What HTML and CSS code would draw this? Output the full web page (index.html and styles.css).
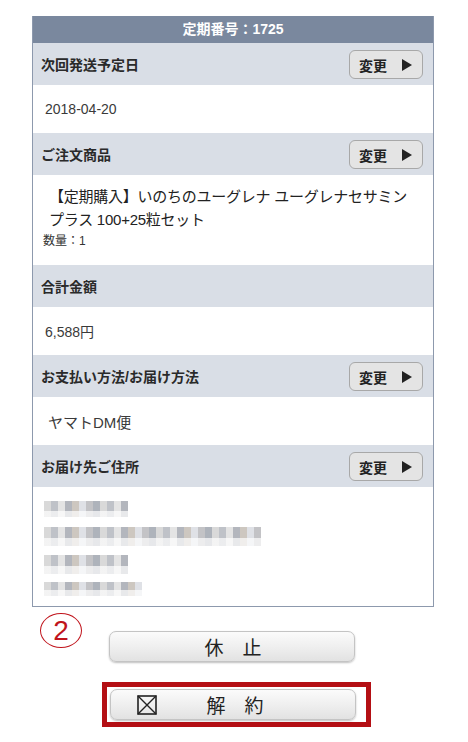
FILE: index.html
```html
<!DOCTYPE html>
<html lang="ja">
<head>
<meta charset="utf-8">
<link rel="stylesheet" href="styles.css">
</head>
<body>
<div class="card">
  <div class="card-head">定期番号：1725</div>

  <div class="row-label"><span>次回発送予定日</span><button class="chg">変更<span class="tri"></span></button></div>
  <div class="row-value">2018-04-20</div>

  <div class="row-label"><span>ご注文商品</span><button class="chg">変更<span class="tri"></span></button></div>
  <div class="row-product">
    <p class="pname">【定期購入】いのちのユーグレナ ユーグレナセサミン<br>プラス 100+25粒セット</p>
    <p class="qty">数量：1</p>
  </div>

  <div class="row-label"><span>合計金額</span></div>
  <div class="row-value">6,588円</div>

  <div class="row-label"><span>お支払い方法/お届け方法</span><button class="chg">変更<span class="tri"></span></button></div>
  <div class="row-value ship">ヤマトDM便</div>

  <div class="row-label"><span>お届け先ご住所</span><button class="chg">変更<span class="tri"></span></button></div>
  <div class="row-address">
    <div class="blur b1"></div>
    <div class="blur b2"></div>
    <div class="blur b3"></div>
    <div class="blur b4"></div>
  </div>
</div>

<div class="actions">
  <div class="mark">2</div>
  <button class="big pause">休　止</button>
  <div class="highlight">
    <button class="big cancel">
      <svg class="xbox" viewBox="0 0 20 20" width="20" height="20"><rect x="1" y="1" width="18" height="18" fill="none" stroke="#222" stroke-width="1.6"/><path d="M1 1 L19 19 M19 1 L1 19" stroke="#222" stroke-width="1.4"/></svg>
      <span class="lbl">解　約</span>
    </button>
  </div>
</div>
</body>
</html>
```

FILE: styles.css
```css
* { box-sizing: border-box; }
body {
  margin: 0;
  background: #fff;
  font-family: "Liberation Sans", "Noto Sans CJK JP", sans-serif;
  color: #333;
}
.card {
  margin: 16px 0 0 32px;
  width: 402px;
  border: 1px solid #8d99ad;
  border-top: none;
}
.card-head {
  height: 27px;
  background: #7a889e;
  color: #fff;
  font-weight: bold;
  font-size: 14px;
  text-align: center;
  line-height: 27px;
}
.row-label {
  height: 42px;
  background: #d9dee6;
  display: flex;
  align-items: center;
  justify-content: space-between;
  padding: 0 10px 0 8px;
  font-size: 14px;
  font-weight: bold;
  color: #2a2a2a;
}
.chg {
  width: 74px;
  height: 29px;
  border: 1px solid #a8a8a8;
  border-radius: 6px;
  background: #e4e4e4;
  font-family: inherit;
  font-size: 14px;
  font-weight: bold;
  color: #222;
  display: flex;
  align-items: center;
  padding: 0 0 0 9px;
  gap: 15px;
  margin-top: 1px;
}
.tri {
  width: 0;
  height: 0;
  border-left: 10px solid #222;
  border-top: 6px solid transparent;
  border-bottom: 6px solid transparent;
}
.row-value {
  height: 48px;
  display: flex;
  align-items: center;
  padding-left: 12px;
  font-size: 14px;
  color: #3a3a3a;
}
.row-value.ship { padding-left: 15px; font-size: 15px; }
.row-product {
  height: 90px;
  padding: 10px 0 0 10px;
}
.pname {
  margin: 0;
  padding-left: 6px;
  font-size: 15px;
  letter-spacing: -0.25px;
  line-height: 23px;
  color: #222;
  white-space: nowrap;
}
.qty {
  margin: 0;
  font-size: 12px;
  line-height: 20px;
  color: #333;
}
.row-address {
  height: 119px;
  padding: 14px 0 0 11px;
  display: flex;
  flex-direction: column;
}
.blur {
  height: 16px;
  background:
    linear-gradient(180deg, rgba(255,255,255,0) 0 60%, rgba(255,255,255,0.7) 60% 100%),
    repeating-linear-gradient(90deg, #d9d9d9 0 7px, #bfc2c8 7px 14px, #e4e4e4 14px 21px, #b3b6bd 21px 28px, #cdc7c0 28px 35px, #dfe1e6 35px 42px, #c3c3c6 42px 49px, #aeb3bb 49px 56px);
}
.b1 { width: 84px; margin-bottom: 10px; }
.b2 { width: 217px; height: 19px; margin-bottom: 9px; }
.b3 { width: 84px; height: 19px; margin-bottom: 8px; }
.b4 { width: 98px; height: 14px; }

.actions {
  position: relative;
  padding: 24px 0 0 109px;
}
.mark {
  position: absolute;
  left: 40px;
  top: 6px;
  width: 42px;
  height: 35px;
  border: 1.5px solid #c0141c;
  border-radius: 50%;
  color: #c0141c;
  font-size: 28px;
  line-height: 33px;
  text-align: center;
}
.big {
  display: flex;
  align-items: center;
  justify-content: center;
  width: 246px;
  height: 31px;
  border: 1px solid #c4c4c4;
  border-radius: 7px;
  background: linear-gradient(180deg, #fbfbfb 0%, #eeeeee 55%, #e2e2e2 100%);
  box-shadow: 0 1px 2px rgba(0,0,0,0.25);
  font-family: inherit;
  font-size: 19px;
  color: #222;
  padding: 0;
}
.pause { padding-left: 2px; }
.highlight {
  margin: 20px 0 0 -7px;
  width: 269px;
  border: 5px solid #b40f14;
  padding: 2px 10px 2px 3px;
}
.cancel { position: relative; }
.xbox {
  position: absolute;
  left: 26px;
  top: 5px;
}
.lbl { padding-left: 4px; }
```
